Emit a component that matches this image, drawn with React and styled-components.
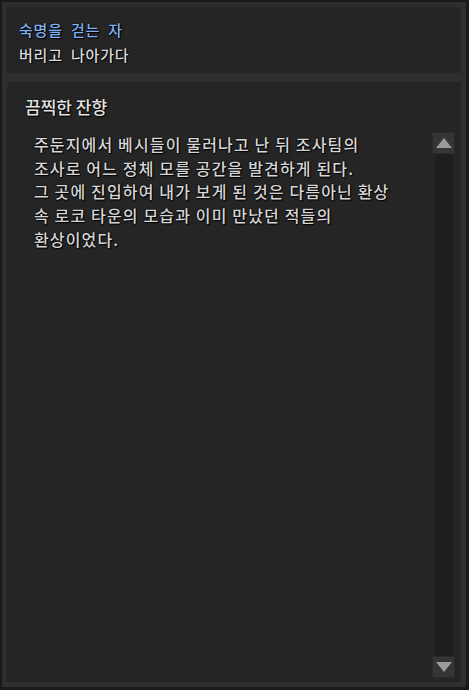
import React from "react";
import styled, { createGlobalStyle } from "styled-components";

const Global = createGlobalStyle`
  html, body { margin: 0; padding: 0; background: #191919; }
  * { box-sizing: border-box; }
`;

const Frame = styled.div`
  width: 469px;
  height: 690px;
  background: #2e2e2e;
  border-style: solid;
  border-color: #191919;
  border-width: 2px 3px 3px 2px;
  padding: 5px;
  display: flex;
  flex-direction: column;
  gap: 9px;
  font-family: "Noto Sans CJK KR", "Noto Sans", sans-serif;
  font-weight: 500;
  text-shadow: 1px 1px 1px #000, 0 0 2px #000;
`;

const Header = styled.div`
  height: 66px;
  background: #252525;
  padding: 10px 12px 6px;
  display: flex;
  flex-direction: column;
`;

const HeaderLine = styled.div`
  font-size: 15px;
  line-height: 25px;
  letter-spacing: 0.8px;
  word-spacing: 4px;
  color: ${(p) => (p.$accent ? "#7eb2f2" : "#dadada")};
`;

const Content = styled.div`
  flex: 1;
  background: #252525;
  display: grid;
  grid-template-columns: 1fr 23px;
  grid-template-rows: auto 1fr;
  padding: 12px 6px 4px 0;
  min-height: 0;
`;

const Title = styled.div`
  grid-column: 1 / -1;
  padding-left: 18px;
  font-size: 17px;
  line-height: 26px;
  color: #e2e2e2;
  margin-bottom: 12px;
`;

const Body = styled.div`
  padding: 1px 0 0 27px;
  font-size: 16px;
  line-height: 23.7px;
  letter-spacing: 1.15px;
  color: #d6d6d6;
`;

const Line = styled.div`
  white-space: nowrap;
`;

const Scrollbar = styled.div`
  display: flex;
  flex-direction: column;
  align-items: center;
`;

const ArrowButton = styled.div`
  width: 23px;
  height: 22px;
  background: #353535;
  border: 1px solid #2a2a2a;
  display: flex;
  align-items: center;
  justify-content: center;
`;

const Track = styled.div`
  flex: 1;
  width: 18px;
  background: #1e1e1e;
`;

const Arrow = ({ down }) => (
  <svg width="16" height="10" viewBox="0 0 16 10">
    {down ? (
      <polygon points="0,0 16,0 8,10" fill="#9a9aa0" />
    ) : (
      <polygon points="8,0 16,10 0,10" fill="#9a9aa0" />
    )}
  </svg>
);

const lines = [
  "주둔지에서 베시들이 물러나고 난 뒤 조사팀의",
  "조사로 어느 정체 모를 공간을 발견하게 된다.",
  "그 곳에 진입하여 내가 보게 된 것은 다름아닌 환상",
  "속 로코 타운의 모습과 이미 만났던 적들의",
  "환상이었다.",
];

export default function App() {
  return (
    <>
      <Global />
      <Frame>
        <Header>
          <HeaderLine $accent>숙명을 걷는 자</HeaderLine>
          <HeaderLine>버리고 나아가다</HeaderLine>
        </Header>
        <Content>
          <Title>끔찍한 잔향</Title>
          <Body>
            {lines.map((l, i) => (
              <Line key={i}>{l}</Line>
            ))}
          </Body>
          <Scrollbar>
            <ArrowButton>
              <Arrow />
            </ArrowButton>
            <Track />
            <ArrowButton>
              <Arrow down />
            </ArrowButton>
          </Scrollbar>
        </Content>
      </Frame>
    </>
  );
}
